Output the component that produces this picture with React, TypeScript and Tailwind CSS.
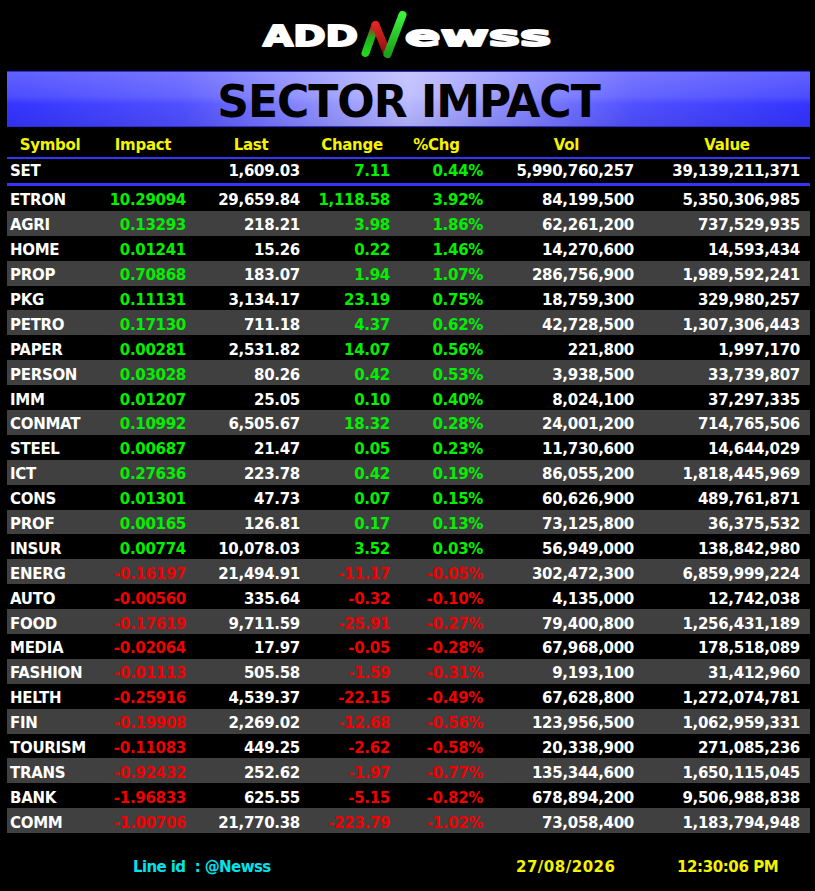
import React from "react";

type Row = [string, string, string, string, string, string, string];

const rows: Row[] = [
  ["ETRON", "10.29094", "29,659.84", "1,118.58", "3.92%", "84,199,500", "5,350,306,985"],
  ["AGRI", "0.13293", "218.21", "3.98", "1.86%", "62,261,200", "737,529,935"],
  ["HOME", "0.01241", "15.26", "0.22", "1.46%", "14,270,600", "14,593,434"],
  ["PROP", "0.70868", "183.07", "1.94", "1.07%", "286,756,900", "1,989,592,241"],
  ["PKG", "0.11131", "3,134.17", "23.19", "0.75%", "18,759,300", "329,980,257"],
  ["PETRO", "0.17130", "711.18", "4.37", "0.62%", "42,728,500", "1,307,306,443"],
  ["PAPER", "0.00281", "2,531.82", "14.07", "0.56%", "221,800", "1,997,170"],
  ["PERSON", "0.03028", "80.26", "0.42", "0.53%", "3,938,500", "33,739,807"],
  ["IMM", "0.01207", "25.05", "0.10", "0.40%", "8,024,100", "37,297,335"],
  ["CONMAT", "0.10992", "6,505.67", "18.32", "0.28%", "24,001,200", "714,765,506"],
  ["STEEL", "0.00687", "21.47", "0.05", "0.23%", "11,730,600", "14,644,029"],
  ["ICT", "0.27636", "223.78", "0.42", "0.19%", "86,055,200", "1,818,445,969"],
  ["CONS", "0.01301", "47.73", "0.07", "0.15%", "60,626,900", "489,761,871"],
  ["PROF", "0.00165", "126.81", "0.17", "0.13%", "73,125,800", "36,375,532"],
  ["INSUR", "0.00774", "10,078.03", "3.52", "0.03%", "56,949,000", "138,842,980"],
  ["ENERG", "-0.16197", "21,494.91", "-11.17", "-0.05%", "302,472,300", "6,859,999,224"],
  ["AUTO", "-0.00560", "335.64", "-0.32", "-0.10%", "4,135,000", "12,742,038"],
  ["FOOD", "-0.17619", "9,711.59", "-25.91", "-0.27%", "79,400,800", "1,256,431,189"],
  ["MEDIA", "-0.02064", "17.97", "-0.05", "-0.28%", "67,968,000", "178,518,089"],
  ["FASHION", "-0.01113", "505.58", "-1.59", "-0.31%", "9,193,100", "31,412,960"],
  ["HELTH", "-0.25916", "4,539.37", "-22.15", "-0.49%", "67,628,800", "1,272,074,781"],
  ["FIN", "-0.19908", "2,269.02", "-12.68", "-0.56%", "123,956,500", "1,062,959,331"],
  ["TOURISM", "-0.11083", "449.25", "-2.62", "-0.58%", "20,338,900", "271,085,236"],
  ["TRANS", "-0.92432", "252.62", "-1.97", "-0.77%", "135,344,600", "1,650,115,045"],
  ["BANK", "-1.96833", "625.55", "-5.15", "-0.82%", "678,894,200", "9,506,988,838"],
  ["COMM", "-1.00706", "21,770.38", "-223.79", "-1.02%", "73,058,400", "1,183,794,948"],
];

const grid =
  "grid grid-cols-[93px_86px_114px_90px_93px_151px_166px] pr-[10px] items-center";

function Logo() {
  return (
    <div className="h-[71px] flex justify-center">
      <svg width="300" height="71" viewBox="0 0 300 71">
        <defs>
          <linearGradient id="gl" x1="0" y1="1" x2="0" y2="0">
            <stop offset="0%" stopColor="#22d622" />
            <stop offset="55%" stopColor="#1fae1f" />
            <stop offset="100%" stopColor="#c01818" />
          </linearGradient>
          <linearGradient id="rd" x1="0" y1="0" x2="0" y2="1">
            <stop offset="0%" stopColor="#e02424" />
            <stop offset="100%" stopColor="#8a1010" />
          </linearGradient>
          <linearGradient id="gr" x1="0" y1="1" x2="0" y2="0">
            <stop offset="0%" stopColor="#1aa01a" />
            <stop offset="100%" stopColor="#3ef03e" />
          </linearGradient>
        </defs>
        <text
          x="5"
          y="46"
          textLength="95"
          lengthAdjust="spacingAndGlyphs"
          fontFamily="DejaVu Sans, sans-serif"
          fontWeight="bold"
          fontSize="29"
          fill="#ffffff"
          stroke="#ffffff"
          strokeWidth="2"
          strokeLinejoin="round"
        >
          ADD
        </text>
        <path d="M107.5 53 L117.5 25" stroke="url(#gl)" strokeWidth="8" strokeLinecap="round" fill="none" />
        <path d="M117.5 25 L129.5 54" stroke="url(#rd)" strokeWidth="8" strokeLinecap="round" fill="none" />
        <path d="M129.5 54 L144.5 15" stroke="url(#gr)" strokeWidth="8" strokeLinecap="round" fill="none" />
        <text
          x="147"
          y="46"
          textLength="146"
          lengthAdjust="spacingAndGlyphs"
          fontFamily="DejaVu Sans, sans-serif"
          fontWeight="bold"
          fontSize="29"
          fill="#ffffff"
          stroke="#ffffff"
          strokeWidth="2"
          strokeLinejoin="round"
        >
          ewss
        </text>
      </svg>
    </div>
  );
}

export default function App() {
  return (
    <div className="w-[815px] h-[891px] bg-black font-['DejaVu_Sans',sans-serif] font-bold overflow-hidden">
      <Logo />
      <div className="ml-[7px] w-[803px] h-[56px] border-y border-[#2b2bd8] bg-[linear-gradient(to_bottom,rgba(255,255,255,0.22)_0%,rgba(255,255,255,0.12)_45%,rgba(0,0,0,0)_60%,rgba(0,0,40,0.08)_100%),linear-gradient(to_right,#3434ff_0%,#5050ff_22%,#b8b8ff_50%,#5050ff_78%,#3434ff_100%)] flex items-center justify-center pt-[5px]">
        <span className="text-[44px] leading-none tracking-[-1px] text-black">SECTOR IMPACT</span>
      </div>

      <div className="ml-[7px] w-[803px] text-[15px] tracking-[-0.3px] leading-none">
        <div className={`${grid} h-[30px] pt-[6px] text-[#f4f400] text-center`}>
          <div className="pr-[7px]">Symbol</div>
          <div>Impact</div>
          <div className="pl-[16px]">Last</div>
          <div className="pl-[14px]">Change</div>
          <div>%Chg</div>
          <div className="pl-[16px]">Vol</div>
          <div className="pl-[20px]">Value</div>
        </div>
        <div className="h-[2px] bg-[#3535ff]" />
        <div className={`${grid} h-[24px] text-white text-right`}>
          <div className="text-left pl-[3px]">SET</div>
          <div></div>
          <div>1,609.03</div>
          <div className="text-[#00f000]">7.11</div>
          <div className="text-[#00f000]">0.44%</div>
          <div>5,990,760,257</div>
          <div>39,139,211,371</div>
        </div>
        <div className="h-[3px] bg-[#3535ff]" />
        {rows.map((r, i) => {
          const neg = r[1].startsWith("-");
          const c = neg ? "text-[#f00000]" : "text-[#00f000]";
          return (
            <div
              key={r[0]}
              className={`${grid} h-[24.9px] pt-[5px] text-white text-right ${i % 2 === 1 ? "bg-[#404040]" : ""}`}
            >
              <div className="text-left pl-[3px]">{r[0]}</div>
              <div className={c}>{r[1]}</div>
              <div>{r[2]}</div>
              <div className={c}>{r[3]}</div>
              <div className={c}>{r[4]}</div>
              <div>{r[5]}</div>
              <div>{r[6]}</div>
            </div>
          );
        })}
      </div>

      <div className="h-[57px] pt-[12px] grid grid-cols-[516px_161px_1fr] items-center text-[15px] leading-none">
        <div className="pl-[133px] text-[#00e4ee] whitespace-pre tracking-[-0.6px]">Line id  : @Newss</div>
        <div className="text-[#f4f400] tracking-[0.5px]">27/08/2026</div>
        <div className="text-[#f4f400] tracking-[-0.4px]">12:30:06 PM</div>
      </div>
    </div>
  );
}
